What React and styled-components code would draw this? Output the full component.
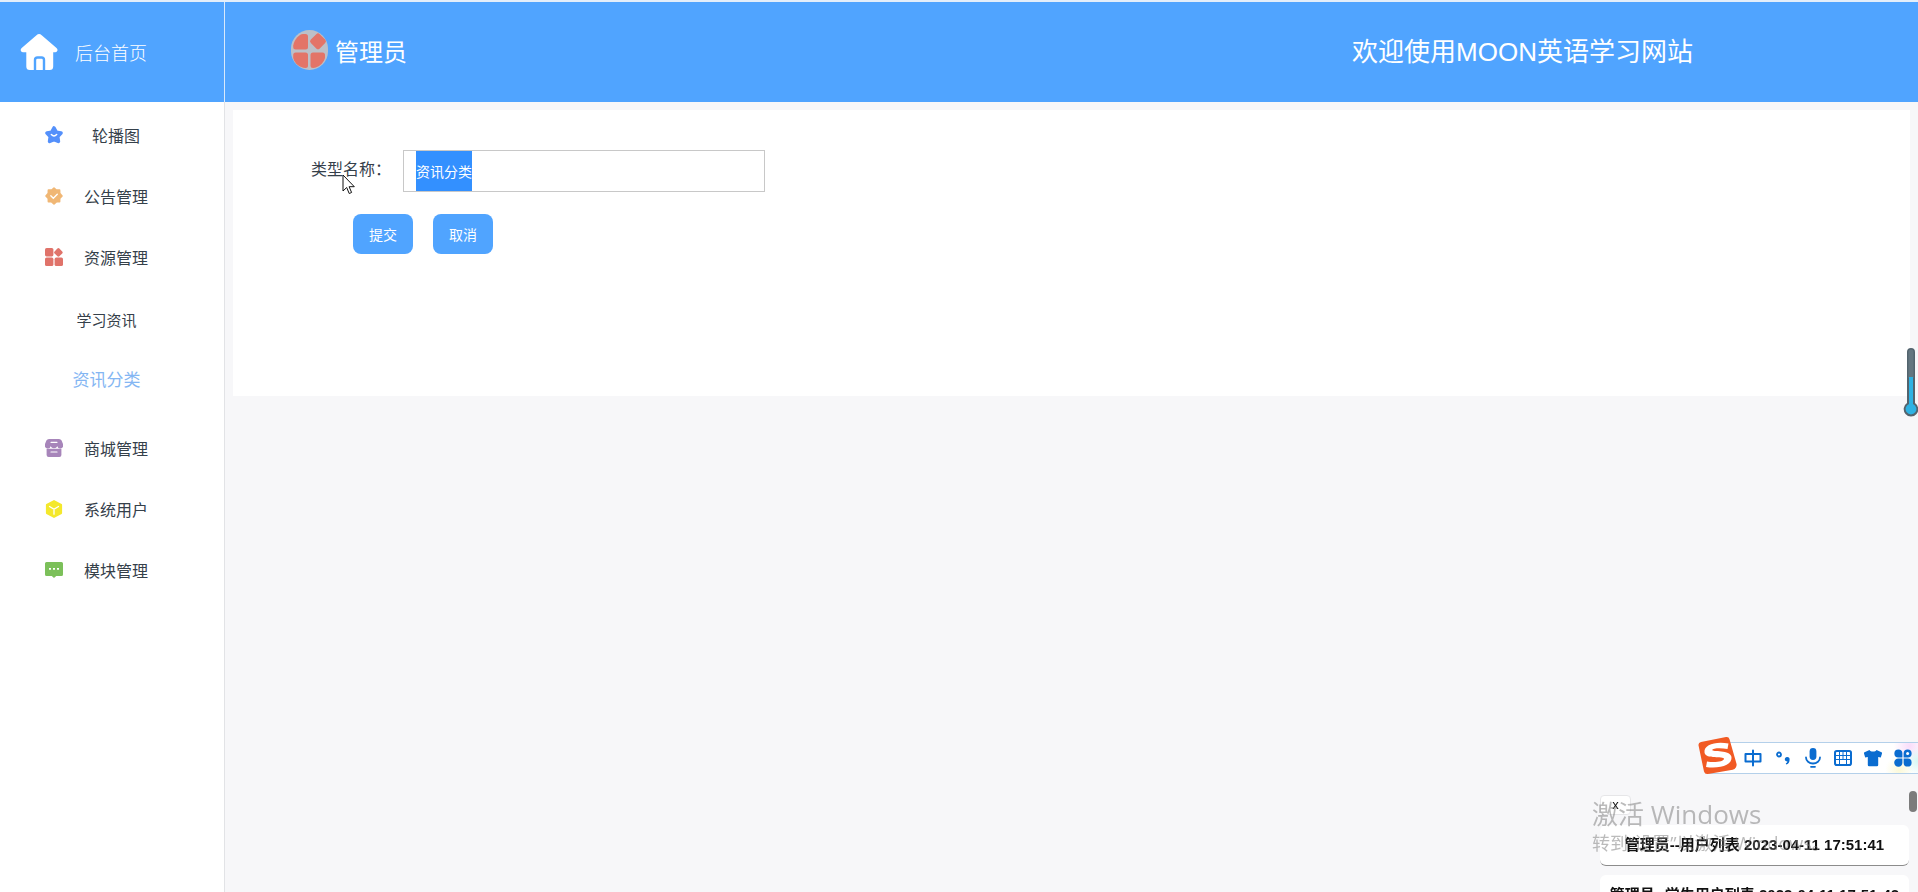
import React, { useEffect, useRef } from "react";
import styled, { createGlobalStyle, css } from "styled-components";

const GlobalStyle = createGlobalStyle`
  * {
    box-sizing: border-box;
  }
  body {
    margin: 0;
    background: #f7f7f9;
    color: #35404a;
    font-family: "Liberation Sans", "Noto Sans CJK SC", sans-serif;
    font-weight: 400;
    overflow: hidden;
  }
  a {
    color: inherit;
    text-decoration: none;
  }
`;

function HomeIcon() {
  return (
    <svg width="38" height="38" viewBox="0 0 38 38" aria-hidden="true">
      <path
        fill="#fff"
        d="M16.500 2.200a4 4 0 0 1 5.200 0l14.800 12.800c1.900 1.700 1 4.300-1.300 4.300H33.200V33.500a3.500 3.500 0 0 1-3.500 3.500H9.800A3.500 3.500 0 0 1 6.300 33.500V19.300H3c-2.300 0-3.200-2.600-1.300-4.300z"
      />
      <path d="M15 37.500V27a2.500 2.500 0 0 1 2.500-2.500h4a2.500 2.500 0 0 1 2.500 2.500v10.500" fill="none" stroke="#50a4ff" strokeWidth="2.400" />
    </svg>
  );
}

function AvatarIcon() {
  return (
    <svg width="38" height="40" viewBox="0 0 38 40" aria-hidden="true">
      <rect width="37" height="40" rx="18.500" fill="#bcc0c8" />
      <path fill="#e37468" d="M2.200 15.500C3.500 9 8 4.500 12 4h2.500A2.500 2.500 0 0 1 17 6.500V17a2.500 2.500 0 0 1-2.500 2.500H4.700a2.500 2.500 0 0 1-2.500-2.500z" />
      <rect x="20.700" y="5" width="12.600" height="12.600" rx="2.500" transform="rotate(45 27 11.300)" fill="#e37468" />
      <path fill="#e37468" d="M2.200 25a2.500 2.500 0 0 1 2.500-2.500h9.800A2.500 2.500 0 0 1 17 25v10.500a2.500 2.500 0 0 1-2.500 2.500C8.500 37.500 4 34 2.200 28z" />
      <path fill="#e37468" d="M19.500 25a2.500 2.500 0 0 1 2.500-2.500h9.500A2.500 2.500 0 0 1 34 25v3c-2 6-6.500 9.500-12 10a2.500 2.500 0 0 1-2.500-2.500z" />
    </svg>
  );
}

const menuIcons = {
  star: (
    <>
      <path
        d="M9 2 11.200 6.200l4.800.8-3.300 3.500.7 4.900L9 13.600l-4.400 1.800.7-4.900L2 7l4.800-.8z"
        fill="#5490fb"
        stroke="#5490fb"
        strokeWidth="3.600"
        strokeLinejoin="round"
      />
      <path d="M6.300 8.600q2.700 2.600 5.400 0" fill="none" stroke="#fff" strokeWidth="1.400" strokeLinecap="round" />
    </>
  ),
  badge: (
    <>
      <path
        d="m9 1 2.300 2.100 3.300-.1.100 3.400L17 9l-2.300 2.400-.1 3.300-3.300.1L9 17l-2.300-2.200-3.300-.1-.1-3.300L1 9l2.300-2.600.1-3.400 3.300.1z"
        fill="#f0b775"
        stroke="#f0b775"
        strokeWidth="1.600"
        strokeLinejoin="round"
      />
      <path d="m5.800 8.800 2.500 2.500 4-4" fill="none" stroke="#fff" strokeWidth="1.300" strokeLinecap="round" />
    </>
  ),
  blocks: (
    <g fill="#e0736a">
      <rect y="0" width="8.400" height="8.400" rx="1.600" />
      <rect x="10" y="1" width="6.800" height="6.800" rx="1.400" transform="rotate(45 13.400 4.400)" />
      <rect y="9.600" width="8.400" height="8.400" rx="1.600" />
      <rect x="9.600" y="9.600" width="8.400" height="8.400" rx="1.600" />
    </g>
  ),
  shop: (
    <>
      <path fill="#a785ba" d="M4 0h10a3 3 0 0 1 2.600 1.600L18 5v1a2.800 2.800 0 0 1-5.600 1.200 3.800 3.800 0 0 1-6.800 0A2.800 2.800 0 0 1 0 6V5l1.400-3.400A3 3 0 0 1 4 0z" />
      <path fill="#a785ba" d="M1.600 9.800h14.800V16a2 2 0 0 1-2 2H3.600a2 2 0 0 1-2-2z" />
      <path d="M6 3.300h6M6 13h6" stroke="#fff" strokeWidth="1.200" strokeLinecap="round" />
    </>
  ),
  cube: (
    <>
      <path
        d="m9 1 7.200 3.900v8.200L9 17l-7.200-3.900V4.900z"
        fill="#f4e82c"
        stroke="#f4e82c"
        strokeWidth="1.800"
        strokeLinejoin="round"
      />
      <path d="M4.500 6.500 9 9.200l4.500-2.700M9 9.200v5" fill="none" stroke="#fff" strokeWidth="1.300" strokeLinecap="round" />
    </>
  ),
  chat: (
    <>
      <path fill="#7cc05a" d="M1.500 1h15A1.500 1.500 0 0 1 18 2.500v11a1.500 1.500 0 0 1-1.500 1.500h-5.300L9 17l-2.200-2H1.500A1.500 1.500 0 0 1 0 13.500V2.500A1.500 1.500 0 0 1 1.500 1z" />
      <path fill="#fff" d="M4 7h2v1.700H4zM8 7h2v1.700H8zM12 7h2v1.700h-2z" />
    </>
  ),
};

function MenuIcon({ name }) {
  return (
    <svg width="18" height="18" viewBox="0 0 18 18" aria-hidden="true">
      {menuIcons[name]}
    </svg>
  );
}

const menu = [
  { icon: "star", label: "轮播图" },
  { icon: "badge", label: "公告管理" },
  {
    icon: "blocks",
    label: "资源管理",
    children: [{ label: "学习资讯" }, { label: "资讯分类", active: true }],
  },
  { icon: "shop", label: "商城管理" },
  { icon: "cube", label: "系统用户" },
  { icon: "chat", label: "模块管理" },
];

const logs = [
  "管理员--用户列表 2023-04-11 17:51:41",
  "管理员--学生用户列表 2023-04-11 17:51:42",
];

function Sidebar() {
  return (
    <Side>
      <Menu>
        {menu.map((item) => (
          <li key={item.label}>
            <MenuLink href="#">
              <MenuIcon name={item.icon} />
              <MenuLabel>{item.label}</MenuLabel>
            </MenuLink>
            {item.children && (
              <SubMenu>
                {item.children.map((child) => (
                  <li key={child.label}>
                    <SubLink href="#" $active={child.active}>
                      {child.label}
                    </SubLink>
                  </li>
                ))}
              </SubMenu>
            )}
          </li>
        ))}
      </Menu>
    </Side>
  );
}

function TypeForm() {
  const inputRef = useRef(null);

  useEffect(() => {
    inputRef.current.focus();
    inputRef.current.select();
  }, []);

  return (
    <Card onSubmit={(e) => e.preventDefault()}>
      <Field>
        <FieldLabel htmlFor="typeName">类型名称：</FieldLabel>
        <TextInput id="typeName" ref={inputRef} defaultValue="资讯分类" />
      </Field>
      <Actions>
        <Button type="submit">提交</Button>
        <Button type="button">取消</Button>
      </Actions>
    </Card>
  );
}

function ImeBar() {
  return (
    <Ime>
      <ImeLogo width="42" height="40" viewBox="0 0 42 40" aria-hidden="true">
        <path fill="#f15a24" d="M3 6 28 1a3 3 0 0 1 3.500 2.200l7 24.500a5 5 0 0 1-3.800 6L10 38a3.500 3.500 0 0 1-4-2.500L.6 9.800A3.200 3.200 0 0 1 3 6z" />
        <path
          fill="#fff"
          d="M30.500 7.500 29.500 13C23 11.500 14.500 12 14.200 14c-.3 2 18.300-.5 19.300 7C34.500 29 22 33 8 31l1-5.500c8 1.500 17 0 17-2.700 0-3-18.500 1-19.500-6.300C5.500 8.500 18 5 30.500 7.500z"
        />
      </ImeLogo>
      <svg width="18" height="18" viewBox="0 0 18 18" aria-hidden="true">
        <path d="M1.500 5h15v7.500h-15zM9 1.500v15" fill="none" stroke="#0a6cd0" strokeWidth="2" strokeLinejoin="round" strokeLinecap="round" />
      </svg>
      <svg width="18" height="18" viewBox="0 0 18 18" aria-hidden="true">
        <circle cx="5" cy="5.500" r="2" fill="none" stroke="#0a6cd0" strokeWidth="1.800" />
        <path fill="#0a6cd0" d="M13 8a2.500 2.500 0 0 1 2.600 2.700c0 2.500-1.300 4.300-3.400 4.900l-.4-1.300c1-.4 1.500-1 1.600-1.800-1.700 0-2.600-.9-2.600-2.200S11.700 8 13 8z" />
      </svg>
      <svg width="18" height="20" viewBox="0 0 18 20" aria-hidden="true">
        <rect x="5.600" y="0" width="6.800" height="12" rx="3.400" fill="#0a6cd0" />
        <path d="M2 9.500a7 6 0 0 0 14 0M7 18.800h4" fill="none" stroke="#0a6cd0" strokeWidth="1.800" strokeLinecap="round" />
      </svg>
      <svg width="18" height="18" viewBox="0 0 18 18" aria-hidden="true">
        <rect x="1" y="2" width="16" height="14" rx="1.800" fill="none" stroke="#0a6cd0" strokeWidth="2" />
        <path d="M2 6.500h14M2 10.500h14M5.500 3v13M9 3v7.500M12.500 3v13" stroke="#0a6cd0" strokeWidth="1" />
      </svg>
      <svg width="18" height="18" viewBox="0 0 18 18" aria-hidden="true">
        <path fill="#0a6cd0" d="M5.500 1C6.500 3 11.500 3 12.500 1l5 2.200c.5.300.6.700.5 1.200L16.800 8.500l-2.600-.4V16a1.300 1.300 0 0 1-1.300 1.300H5.100A1.300 1.300 0 0 1 3.800 16V8.100l-2.600.4L0 4.400c-.1-.5 0-.9.500-1.200z" />
      </svg>
      <svg width="18" height="18" viewBox="0 0 18 18" aria-hidden="true">
        <g fill="#0a6cd0">
          <path d="M4.300.5A4.100 4.100 0 0 1 8.400 4.600v3.800H4.300a3.950 3.950 0 0 1 0-7.900z" />
          <path d="M4.300 9.600h4.100v3.800a4.100 4.100 0 1 1-4.100-3.800z" />
          <path d="M9.600 9.600h4.100a4 4 0 1 1-4.100 4.100z" />
          <path d="M13.700.5a3.950 3.950 0 0 1 0 7.900H9.600V4.600A4.100 4.100 0 0 1 13.700.5z" />
        </g>
        <circle cx="13.600" cy="4.400" r="1.500" fill="#fff" />
      </svg>
    </Ime>
  );
}

export default function App() {
  return (
    <Page>
      <GlobalStyle />
      <Header>
        <HomeLink href="#">
          <HomeIcon />
          后台首页
        </HomeLink>
        <TopBar>
          <User>
            <AvatarIcon />
            管理员
          </User>
          <Welcome>欢迎使用MOON英语学习网站</Welcome>
        </TopBar>
      </Header>
      <Body>
        <Sidebar />
        <Main>
          <TypeForm />
        </Main>
      </Body>

      <Thermometer width="16" height="72" viewBox="0 0 16 72" aria-hidden="true">
        <path fill="#53646e" d="M4 5a4 4 0 0 1 8 0v51a7.300 7.300 0 1 1-8 0z" />
        <path fill="#647680" d="M5.500 5a2.500 2.500 0 0 1 5 0v26h-5z" />
        <path fill="#2fb2e3" d="M6 30h4v27a5.400 5.400 0 1 1-4 0z" />
      </Thermometer>

      <ImeBar />

      <LogPanel>
        <CloseButton type="button">x</CloseButton>
        <LogList>
          {logs.map((log) => (
            <LogItem key={log}>{log}</LogItem>
          ))}
        </LogList>
        <ScrollThumb />
      </LogPanel>

      <Watermark>
        <WatermarkTitle>激活 Windows</WatermarkTitle>
        <WatermarkHint>转到“设置”以激活 Windows。</WatermarkHint>
      </Watermark>

      <Cursor width="14" height="21" viewBox="0 0 14 21" aria-hidden="true">
        <path d="M1 1v16l3.700-3.500L7.200 19.500l2.400-1-2.500-5.800h5.200z" fill="#fff" stroke="#111" strokeWidth="1" />
      </Cursor>
    </Page>
  );
}

const Page = styled.div`
  min-height: 100vh;
  display: flex;
  flex-direction: column;
`;

const Header = styled.header`
  display: flex;
  height: 102px;
  border-top: 2px solid #e3eefa;
  background: #50a4ff;
  color: #fff;
`;

const HomeLink = styled.a`
  flex: 0 0 225px;
  display: flex;
  align-items: center;
  gap: 17px;
  padding-left: 20px;
  border-right: 1px solid #d9e9fb;
  font-size: 18px;
  font-weight: 300;
`;

const TopBar = styled.div`
  flex: 1;
  display: flex;
  align-items: center;
  justify-content: space-between;
  padding: 0 225px 0 66px;
`;

const User = styled.div`
  display: flex;
  align-items: center;
  gap: 6px;
  padding-bottom: 4px;
  font-size: 24px;
`;

const Welcome = styled.h1`
  margin: 0;
  font-size: 26px;
  line-height: 32px;
  font-weight: 400;
`;

const Body = styled.div`
  flex: 1;
  display: flex;
`;

const Side = styled.nav`
  flex: 0 0 225px;
  background: #fff;
  border-right: 1px solid #e2e3e6;
`;

const Menu = styled.ul`
  margin: 0;
  padding: 2px 0 0;
  list-style: none;
`;

const MenuLink = styled.a`
  display: flex;
  align-items: center;
  gap: 21px;
  height: 61px;
  padding-left: 45px;
  font-size: 16px;
`;

const MenuLabel = styled.span`
  width: 64px;
  text-align: center;
`;

const SubMenu = styled.ul`
  margin: 0;
  padding: 4px 0 6px;
  list-style: none;
`;

const SubLink = styled.a`
  display: block;
  width: 213px;
  line-height: 60px;
  text-align: center;
  font-size: 15px;
  ${({ $active }) =>
    $active &&
    css`
      font-size: 17px;
      color: #84b6f3;
    `}
`;

const Main = styled.main`
  flex: 1;
  padding: 8px;
`;

const Card = styled.form`
  padding: 40px 78px 142px;
  background: #fff;
`;

const Field = styled.div`
  display: flex;
  gap: 12px;
  font-size: 16px;
`;

const FieldLabel = styled.label`
  line-height: 40px;
`;

const TextInput = styled.input`
  width: 362px;
  height: 42px;
  padding: 0 12px;
  border: 1px solid #c8c8c8;
  outline: none;
  background: #fff;
  font-family: inherit;
  font-size: 14px;
  line-height: 40px;
  color: #333;
  &:focus {
    background: linear-gradient(#3390ff, #3390ff) 12px 0 / 4em 100% no-repeat #fff;
  }
  &::selection {
    background: transparent;
    color: #fff;
  }
`;

const Actions = styled.div`
  display: flex;
  gap: 20px;
  margin-top: 22px;
  padding-left: 42px;
`;

const Button = styled.button`
  width: 60px;
  height: 40px;
  padding: 0;
  border: 0;
  border-radius: 8px;
  background: #50a4ff;
  color: #fff;
  font-family: inherit;
  font-size: 14px;
`;

const Thermometer = styled.svg`
  position: fixed;
  top: 347px;
  right: -1px;
`;

const Ime = styled.div`
  position: fixed;
  right: 0;
  bottom: 118px;
  display: flex;
  align-items: center;
  gap: 12px;
  height: 32px;
  padding: 0 6px 0 34px;
  border: 1px solid #b4d0ea;
  border-right: 0;
  background:
    radial-gradient(circle at 100% 60%, #d5f7f4, transparent 14px),
    radial-gradient(circle at 96% 10%, #f9dcfa, transparent 16px),
    radial-gradient(circle at 91% 90%, #fbf9d8, transparent 14px),
    #fff;
`;

const ImeLogo = styled.svg`
  position: absolute;
  left: -12px;
  top: -7px;
`;

const LogPanel = styled.aside`
  position: fixed;
  right: 0;
  bottom: 0;
  width: 318px;
  height: 101px;
  padding: 4px 9px 0 0;
  overflow: hidden;
`;

const CloseButton = styled.button`
  display: block;
  width: 31px;
  height: 20px;
  padding: 0;
  border: 1px solid #e6e6e8;
  border-radius: 4px;
  background: #fff;
  color: #111;
  font-family: inherit;
  font-size: 13px;
  line-height: 16px;
`;

const LogList = styled.ul`
  display: grid;
  gap: 9px;
  margin: 10px 0 0;
  padding: 0;
  list-style: none;
`;

const LogItem = styled.li`
  height: 41px;
  border-bottom: 1px solid #8c8c8c;
  border-radius: 6px;
  background: #fff;
  color: #111;
  font-size: 15px;
  font-weight: 700;
  line-height: 40px;
  text-align: center;
  white-space: nowrap;
`;

const ScrollThumb = styled.div`
  position: absolute;
  top: 0;
  right: 1px;
  width: 8px;
  height: 21px;
  border-radius: 4px;
  background: #7c7c7c;
`;

const Watermark = styled.div`
  position: fixed;
  right: 92px;
  bottom: 36px;
  width: 234px;
  color: rgba(120, 120, 120, 0.5);
  font-family: "Open Sans", "Noto Sans CJK SC", sans-serif;
  white-space: nowrap;
  pointer-events: none;
`;

const WatermarkTitle = styled.div`
  font-size: 26px;
  line-height: 32px;
`;

const WatermarkHint = styled.div`
  font-size: 18px;
  line-height: 26px;
`;

const Cursor = styled.svg`
  position: fixed;
  top: 174px;
  left: 342px;
`;
